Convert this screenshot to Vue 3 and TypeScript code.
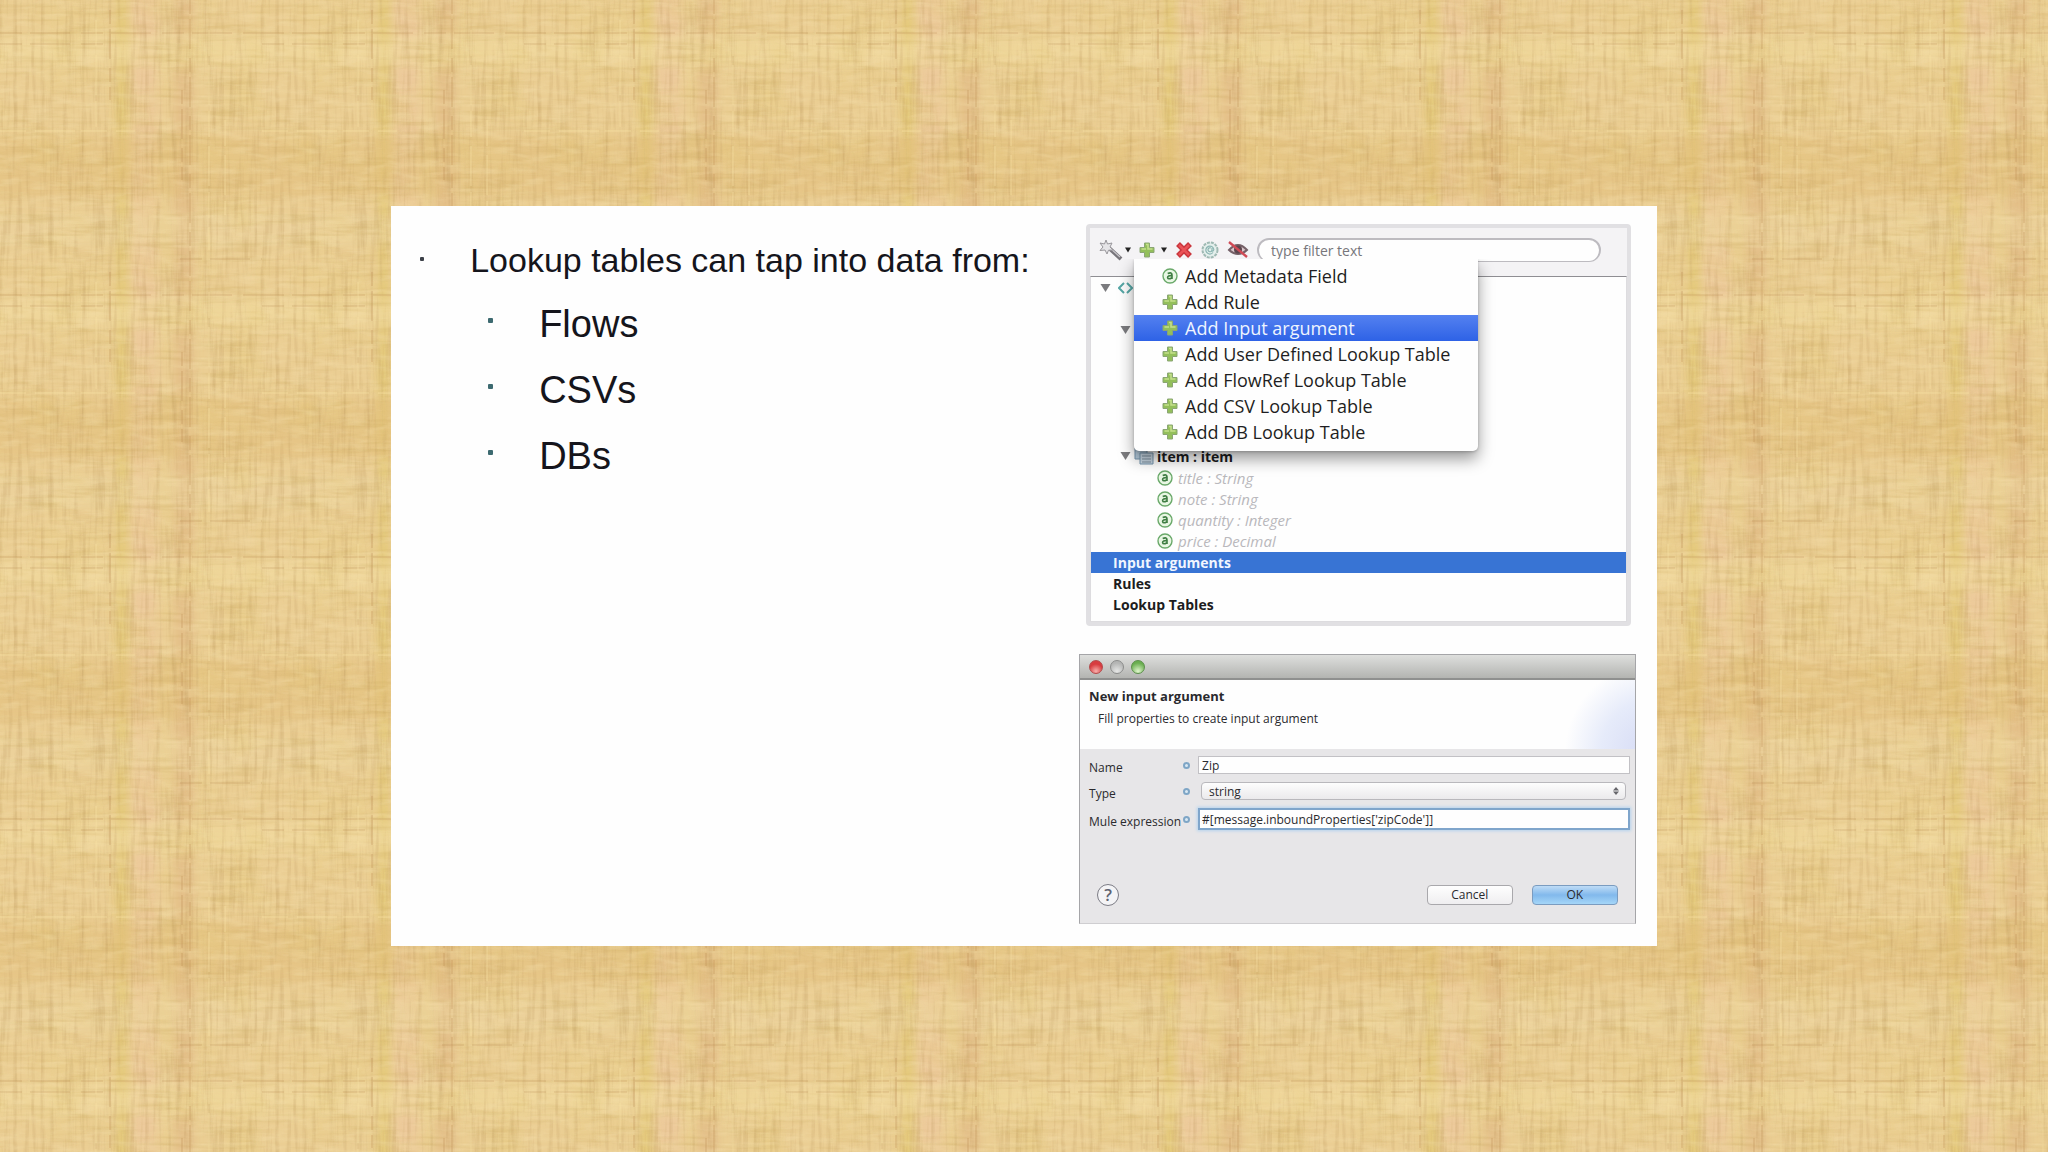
<script setup lang="ts">
import { ref } from 'vue'

interface MenuItem {
  label: string
  icon: 'field' | 'plus'
}

const topics: string[] = ['Flows', 'CSVs', 'DBs']

const menuItems: MenuItem[] = [
  { label: 'Add Metadata Field', icon: 'field' },
  { label: 'Add Rule', icon: 'plus' },
  { label: 'Add Input argument', icon: 'plus' },
  { label: 'Add User Defined Lookup Table', icon: 'plus' },
  { label: 'Add FlowRef Lookup Table', icon: 'plus' },
  { label: 'Add CSV Lookup Table', icon: 'plus' },
  { label: 'Add DB Lookup Table', icon: 'plus' },
]
const activeItem = ref('Add Input argument')

const attributes: string[] = ['title : String', 'note : String', 'quantity : Integer', 'price : Decimal']
const sections: string[] = ['Input arguments', 'Rules', 'Lookup Tables']
const activeSection = ref('Input arguments')

const filterText = ref('')
const argName = ref('Zip')
const argType = ref('string')
const expression = ref("#[message.inboundProperties['zipCode']]")
</script>

<template>
  <div class="page">
    <svg class="weave" aria-hidden="true">
      <defs>
        <filter id="warp" x="0" y="0" width="100%" height="100%" color-interpolation-filters="sRGB">
          <feTurbulence type="fractalNoise" baseFrequency="0.22 0.015" numOctaves="3" seed="4" stitchTiles="stitch" />
          <feColorMatrix values="0 0 0 0 0.68  0 0 0 0 0.53  0 0 0 0 0.3  2.4 0 0 0 -1.1" />
        </filter>
        <filter id="weft" x="0" y="0" width="100%" height="100%" color-interpolation-filters="sRGB">
          <feTurbulence type="fractalNoise" baseFrequency="0.015 0.2" numOctaves="3" seed="9" stitchTiles="stitch" />
          <feColorMatrix values="0 0 0 0 0.74  0 0 0 0 0.6  0 0 0 0 0.28  2.4 0 0 0 -1.1" />
        </filter>
        <filter id="shine" x="0" y="0" width="100%" height="100%" color-interpolation-filters="sRGB">
          <feTurbulence type="fractalNoise" baseFrequency="0.04 0.15" numOctaves="3" seed="21" stitchTiles="stitch" />
          <feColorMatrix values="0 0 0 0 0.96  0 0 0 0 0.88  0 0 0 0 0.68  0 2.6 0 0 -1.15" />
        </filter>
        <filter id="blotch" x="0" y="0" width="100%" height="100%" color-interpolation-filters="sRGB">
          <feTurbulence type="fractalNoise" baseFrequency="0.023 0.023" numOctaves="2" seed="6" stitchTiles="stitch" />
          <feColorMatrix values="0 0 0 0 0.9  0 0 0 0 0.8  0 0 0 0 0.48  0 0 2.4 0 -1" />
        </filter>
        <filter id="soft" x="-50%" y="-50%" width="200%" height="200%"><feGaussianBlur stdDeviation="4" /></filter>
        <pattern id="cloth" width="262" height="262" patternUnits="userSpaceOnUse">
          <rect width="262" height="262" fill="#ebce93" />
          <g filter="url(#soft)">
            <rect x="132" y="-20" width="26" height="300" fill="#edca9b" opacity=".9" />
            <rect x="174" y="-20" width="20" height="300" fill="#dbb07c" opacity=".45" />
            <rect x="116" y="-20" width="12" height="300" fill="#e0c468" opacity=".6" />
            <rect x="-20" y="136" width="300" height="60" fill="#e0bb78" opacity=".45" />
            <rect x="-20" y="36" width="300" height="30" fill="#f1da9f" opacity=".6" />
            <rect x="-20" y="215" width="300" height="30" fill="#eed69f" opacity=".5" />
          </g>
          <rect width="262" height="262" filter="url(#blotch)" opacity=".3" />
          <rect width="262" height="262" filter="url(#warp)" opacity=".28" />
          <rect width="262" height="262" filter="url(#weft)" opacity=".22" />
          <rect width="262" height="262" filter="url(#shine)" opacity=".35" />
          <path d="M190 0V262M182 90V180M110 10V100" stroke="#b98a50" stroke-width="1" stroke-dasharray="14 5 30 9" opacity=".45" />
          <path d="M0 33H262M180 259H262M0 44H110" stroke="#b98a50" stroke-width="1" stroke-dasharray="22 8 40 11" opacity=".35" />
          <path d="M0 131H135M96 20V130M209 30V250M225 120V215" stroke="#fbe6a8" stroke-width="1" stroke-dasharray="26 9 40 6" opacity=".55" />
        </pattern>
      </defs>
      <rect width="100%" height="100%" fill="url(#cloth)" />
    </svg>

    <svg class="symbols" aria-hidden="true">
      <symbol id="plus" viewBox="0 0 16 16">
        <path d="M5.500 1h5v4.500h4.500v5h-4.500v4.500h-5v-4.500H1v-5h4.500z" fill="#93bf5a" stroke="#8aa574" stroke-width="1" />
        <path d="M7 2.500h2v4.500h4.500" fill="none" stroke="#c5e08d" stroke-width="1.500" />
        <path d="M2.500 7H7" stroke="#c5e08d" stroke-width="1.500" />
      </symbol>
      <symbol id="field" viewBox="0 0 16 16">
        <circle cx="8" cy="8" r="7" fill="#e9f7e4" stroke="#6aa96a" stroke-width="1.400" />
        <path d="M5.700 5.600Q10 3.600 10 7v4M10 7.700Q5.500 7.300 5.600 9.500Q6 12 10 9.700" fill="none" stroke="#3f7d43" stroke-width="1.600" />
      </symbol>
      <symbol id="down" viewBox="0 0 10 10"><path d="M0 1h10L5 9z" fill="currentColor" /></symbol>
    </svg>

    <main class="slide">
      <section class="outline">
        <ul class="lead">
          <li>
            <span>Lookup tables can tap into data from:</span>
            <ul class="topics">
              <li v-for="topic in topics" :key="topic">{{ topic }}</li>
            </ul>
          </li>
        </ul>
      </section>

      <div class="shots">
        <section class="explorer">
          <div class="toolbar">
            <button class="tool wand" aria-label="Wizard">
              <svg width="24" height="22" viewBox="0 0 24 22">
                <path d="M10 9l12 11" stroke="#77747a" stroke-width="4" />
                <path d="M11 9l10 9" stroke="#c9c7cc" stroke-width="1.200" />
                <path d="M7 1l1.500 4 4.500-1-2 4 3 3-4.500.2L8 15l-2-4-5 .5L4 8 1 4l4.500 1z" fill="#e6e5e8" stroke="#98969b" />
              </svg>
              <svg class="caret" width="6" height="6"><use href="#down" /></svg>
            </button>
            <button class="tool add" aria-label="Add">
              <svg width="16" height="16"><use href="#plus" /></svg>
              <svg class="caret" width="6" height="6"><use href="#down" /></svg>
            </button>
            <button class="tool" aria-label="Delete">
              <svg width="18" height="18" viewBox="0 0 18 18">
                <path d="M3 3l12 12M15 3L3 15" stroke="#c9353c" stroke-width="5.500" />
                <path d="M4 4l10 10M14 4L4 14" stroke="#ea5257" stroke-width="2.500" />
              </svg>
            </button>
            <button class="tool" aria-label="Metadata">
              <svg width="18" height="18" viewBox="0 0 18 18">
                <circle cx="9" cy="9" r="7.500" fill="#e4efec" stroke="#9fb9b3" stroke-width="2" stroke-dasharray="3 1" />
                <path d="M12 11.500A4 4 0 1 1 12.800 8.500Q12.500 10.500 11 10V7M11 9a2 2 0 1 1-1-2" fill="none" stroke="#8bb5b2" stroke-width="1.200" />
              </svg>
            </button>
            <button class="tool" aria-label="Hide">
              <svg width="22" height="18" viewBox="0 0 22 18">
                <path d="M2 9Q11-1 20 9Q11 17 2 9z" fill="#d9c5ca" stroke="#746067" stroke-width="2" />
                <circle cx="11" cy="8.500" r="4" fill="#5c464d" />
                <path d="M2 1l18 15" stroke="#d04a55" stroke-width="2.400" />
              </svg>
            </button>
            <input v-model="filterText" class="filter" type="text" placeholder="type filter text" aria-label="Filter" />
          </div>

          <div class="tree">
            <div class="row root">
              <svg class="twist" width="11" height="10"><use href="#down" /></svg>
              <svg width="15" height="12" viewBox="0 0 15 12"><path d="M6 1L1 6l5 5M9 1l5 5-5 5" fill="none" stroke="#56a7a5" stroke-width="2" /></svg>
            </div>
            <div class="row" />
            <div class="row branch"><svg class="twist" width="11" height="10"><use href="#down" /></svg></div>
            <div v-for="n in 5" :key="n" class="row" />
            <div class="row branch">
              <svg class="twist" width="11" height="10"><use href="#down" /></svg>
              <svg class="list" width="20" height="18" viewBox="0 0 20 18">
                <path d="M1 1h12v11H1z" fill="#b5cbdc" stroke="#7796ae" />
                <path d="M6 6h13v11H6z" fill="#c9d8e4" stroke="#7796ae" />
                <path d="M8 9h9M8 12h9M8 15h9" stroke="#7f91a0" />
              </svg>
              <b>item : item</b>
            </div>
            <div v-for="attr in attributes" :key="attr" class="row leaf">
              <svg width="16" height="16"><use href="#field" /></svg>
              <i>{{ attr }}</i>
            </div>
            <div
              v-for="name in sections"
              :key="name"
              class="row section"
              :class="{ selected: name === activeSection }"
              @click="activeSection = name"
            >
              {{ name }}
            </div>
          </div>

          <div class="menu" role="menu">
            <button
              v-for="item in menuItems"
              :key="item.label"
              role="menuitem"
              :class="{ active: item.label === activeItem }"
              @mouseenter="activeItem = item.label"
            >
              <svg width="16" height="16"><use :href="'#' + item.icon" /></svg>
              {{ item.label }}
            </button>
          </div>
        </section>

        <form class="dialog" @submit.prevent>
          <div class="titlebar">
            <button type="button" class="light red" aria-label="Close" />
            <button type="button" class="light gray" aria-label="Minimize" />
            <button type="button" class="light green" aria-label="Zoom" />
          </div>
          <header class="banner">
            <h2>New input argument</h2>
            <p>Fill properties to create input argument</p>
          </header>
          <div class="fields">
            <div class="field">
              <label for="arg-name">Name</label>
              <span class="info" />
              <input id="arg-name" v-model="argName" type="text" />
            </div>
            <div class="field">
              <label for="arg-type">Type</label>
              <span class="info" />
              <div class="picker">
                <select id="arg-type" v-model="argType"><option>string</option></select>
                <svg width="6" height="8" viewBox="0 0 6 8"><path d="M0 3.500L3 0l3 3.500zM0 4.500h6L3 8z" fill="#66666b" /></svg>
              </div>
            </div>
            <div class="field">
              <label for="arg-expr">Mule expression</label>
              <span class="info" />
              <input id="arg-expr" v-model="expression" class="focused" type="text" />
            </div>
          </div>
          <footer class="actions">
            <button type="button" class="help" aria-label="Help">?</button>
            <button type="button" class="push">Cancel</button>
            <button type="submit" class="push primary">OK</button>
          </footer>
        </form>
      </div>
    </main>
  </div>
</template>

<style>
body {
  margin: 0;
  background: #ebcd8b;
}
</style>

<style scoped>
* {
  box-sizing: border-box;
}
button,
input,
select {
  font: inherit;
  color: inherit;
  margin: 0;
  padding: 0;
  border: 0;
  background: none;
}
.page {
  position: relative;
  min-height: 100vh;
  display: flex;
  align-items: center;
  padding: 0 19.1%;
  font-family: "Open Sans", "Noto Sans", sans-serif;
}
.weave {
  position: absolute;
  inset: 0;
  width: 100%;
  height: 100%;
}
.symbols {
  position: absolute;
  width: 0;
  height: 0;
}
.slide {
  position: relative;
  flex: 1;
  display: grid;
  grid-template-columns: minmax(0, 1fr) 45.8%;
  padding: 18px 21px 22px 29px;
  background: #fefefe;
}
.outline {
  padding-top: 16px;
  font-family: "Liberation Sans", Arial, sans-serif;
  color: #15151c;
}
.outline ul {
  margin: 0;
  padding: 0;
  list-style: none;
}
.outline li {
  position: relative;
}
.lead > li {
  padding-left: 50px;
  font-size: 34px;
  line-height: 40px;
  white-space: nowrap;
}
.lead li::before {
  content: "";
  position: absolute;
  left: 0;
  top: 17px;
  width: 4px;
  height: 4px;
  border-radius: 1px;
  background: #3c4048;
}
.lead .topics {
  padding-top: 11px;
}
.topics li {
  margin-left: 18px;
  padding-left: 51px;
  font-size: 38px;
  line-height: 66px;
}
.topics li::before {
  top: 27px;
  width: 5px;
  height: 5px;
  background: #3d6a70;
}
.shots {
  display: flex;
  flex-direction: column;
  gap: 28px;
}
.explorer {
  position: relative;
  margin: 0 5px 0 7px;
  border: 4px solid #e1e0e3;
  border-radius: 4px;
  background: #f4f3f5;
}
.toolbar {
  display: flex;
  align-items: center;
  gap: 8px;
  height: 48px;
  padding: 0 26px 4px 9px;
}
.tool {
  display: flex;
  align-items: center;
}
.caret {
  margin-left: 4px;
  color: #222;
}
.wand .caret {
  margin-left: 2px;
}
.add .caret {
  margin-left: 6px;
}
.filter {
  flex: 1;
  min-width: 0;
  height: 24px;
  padding: 0 12px;
  border: 2px solid #bdbbc0;
  border-bottom-width: 1px;
  border-radius: 12px;
  background: #fefefe;
  font-size: 14px;
  color: #77767b;
}
.filter::placeholder {
  color: #77767b;
}
.tree {
  border: 1px solid #dddcdf;
  border-top-color: #8f8e93;
  padding: 2px 0 6px;
  background: #fefefe;
  font-size: 14px;
  color: #1c1c20;
}
.row {
  display: flex;
  align-items: center;
  height: 21px;
}
.twist {
  color: #7b7b7e;
}
.root {
  gap: 7px;
  padding: 0 0 3px 9px;
}
.branch {
  padding: 0 0 3px 29px;
}
.list {
  margin: 0 3px;
}
.leaf {
  gap: 5px;
  padding: 0 0 2px 66px;
  font-size: 15px;
  color: #b9b8bc;
}
.section {
  padding-left: 22px;
  font-weight: 700;
}
.selected {
  background: #3874d4;
  color: #f1f6ff;
}
.menu {
  position: absolute;
  top: 31px;
  left: 44px;
  width: 344px;
  padding: 4px 0 6px;
  border-radius: 0 0 5px 5px;
  background: #fefefe;
  box-shadow: 0 8px 16px rgba(0, 0, 0, 0.4), 0 1px 3px rgba(0, 0, 0, 0.2);
  clip-path: inset(0 -30px -40px -30px);
  font-size: 18px;
  color: #1e1e22;
}
.menu button {
  display: flex;
  align-items: center;
  gap: 7px;
  width: 100%;
  height: 26px;
  padding-left: 28px;
  white-space: nowrap;
}
.menu .active {
  background: linear-gradient(#5481f0, #2e62e6);
  color: #eef4ff;
}
.dialog {
  border: 1px solid #a5a5a8;
  border-bottom-color: #cfced1;
  background: #e7e6e8;
  font-size: 12px;
  color: #2a2a2e;
}
.titlebar {
  display: flex;
  align-items: center;
  gap: 7px;
  height: 25px;
  padding-left: 9px;
  border-bottom: 2px solid #8f908f;
  background: linear-gradient(#dedfdd, #b3b4b1);
}
.light {
  width: 14px;
  height: 14px;
  border: 1px solid #8b8c8b;
  border-radius: 50%;
}
.red {
  border-color: #b34a4b;
  background: radial-gradient(circle at 50% 85%, #f8b0ac, #d83c40 60%);
}
.gray {
  background: radial-gradient(circle at 50% 85%, #e6e7e6, #b4b5b4 70%);
}
.green {
  border-color: #5b8f4b;
  background: radial-gradient(circle at 50% 85%, #e0f6cd, #6aae50 70%);
}
.banner {
  height: 69px;
  padding: 5px 9px;
  background: radial-gradient(circle 90px at calc(100% + 20px) 105%, #dadff6 20%, #e6ebfa 60%, #fefefe 100%);
}
h2,
p {
  margin: 0;
}
h2 {
  font-size: 13px;
  line-height: 22px;
}
p {
  padding-left: 9px;
  font-size: 12px;
  line-height: 24px;
}
.fields {
  display: flex;
  flex-direction: column;
  gap: 6px;
  padding: 6px 5px 0 9px;
}
.field {
  display: flex;
  align-items: center;
  height: 20px;
}
.field:last-child {
  height: 24px;
}
.field label {
  width: 94px;
  padding-top: 4px;
  white-space: nowrap;
}
.info {
  width: 7px;
  height: 7px;
  border: 2px solid #7fa6c6;
  border-radius: 50%;
  background: #dbe9f3;
}
.field input {
  flex: 1;
  min-width: 0;
  height: 18px;
  margin-left: 8px;
  padding: 0 3px;
  border: 1px solid #c2c1c5;
  background: #fefefe;
}
.field .focused {
  height: 22px;
  padding: 0 2px;
  border: 2px solid #7fa5cb;
  box-shadow: 0 0 3px 1px #b5d3ee;
}
.picker {
  position: relative;
  flex: 1;
  display: flex;
  margin: 0 4px 0 11px;
}
.picker select {
  flex: 1;
  height: 18px;
  padding-left: 7px;
  border: 1px solid #b9b8bc;
  border-radius: 4px;
  background: linear-gradient(#fdfdfd, #ebeaec);
  appearance: none;
}
.picker svg {
  position: absolute;
  right: 7px;
  top: 5px;
}
.actions {
  display: flex;
  align-items: center;
  gap: 19px;
  padding: 53px 17px 17px;
}
.help {
  width: 22px;
  height: 22px;
  margin-right: auto;
  border: 1px solid #7c7c85;
  border-radius: 50%;
  background: #f4f4f6;
  font-size: 17px;
  font-weight: 600;
  line-height: 18px;
  color: #5f6371;
}
.push {
  width: 86px;
  height: 20px;
  border: 1px solid #a9a8ac;
  border-radius: 4px;
  background: linear-gradient(#fefefe, #efeef0);
  line-height: 18px;
}
.primary {
  border-color: #7b9cc0;
  background: linear-gradient(#bfdcf6, #82b9ec 50%, #a5d6f8);
}
</style>
